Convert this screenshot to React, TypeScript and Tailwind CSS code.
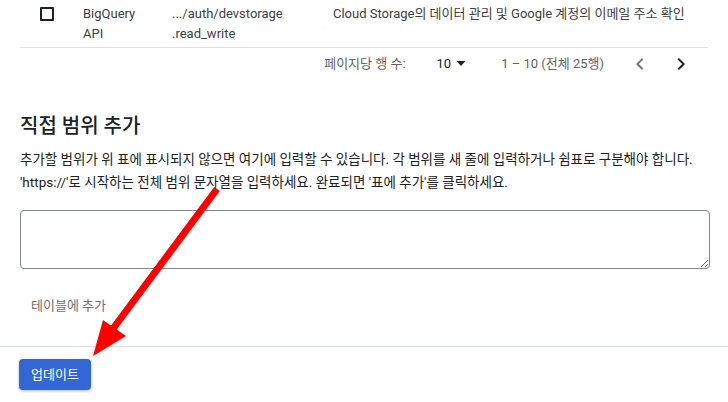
import React from 'react';

const font = "font-['Roboto','Noto_Sans_CJK_KR',sans-serif]";

function Checkbox() {
  return <div className="w-[14px] h-[14px] border-2 border-[#202124] rounded-[1px] mt-[3px]" />;
}

function ScopeRow() {
  return (
    <div className="flex text-[13px] leading-[20px] text-[#3c4043] border-b border-[#e0e0e0] mx-[20px] pt-[4px] pb-[3px]">
      <div className="w-[63px] pl-[20px]">
        <Checkbox />
      </div>
      <div className="w-[89px]">
        BigQuery
        <br />
        API
      </div>
      <div className="w-[161px]">
        .../auth/devstorage
        <br />
        .read_write
      </div>
      <div>Cloud Storage의 데이터 관리 및 Google 계정의 이메일 주소 확인</div>
    </div>
  );
}

function Pagination() {
  return (
    <div className="flex items-center justify-end h-[32px] pr-[35px] text-[13px] text-[#5f6368]">
      <span>페이지당 행 수:</span>
      <span className="ml-[31px] text-[#202124] flex items-center">
        10
        <svg width="10" height="6" viewBox="0 0 10 6" className="ml-[5px]">
          <path d="M0.5 0h9L5 5z" fill="#202124" />
        </svg>
      </span>
      <span className="ml-[35px]">1 – 10 (전체 25행)</span>
      <svg width="24" height="24" viewBox="0 0 24 24" className="ml-[24px]">
        <path d="M15.4 7.4 14 6l-6 6 6 6 1.4-1.4L10.8 12z" fill="#757575" />
      </svg>
      <svg width="24" height="24" viewBox="0 0 24 24" className="ml-[17px]">
        <path d="M10 6 8.6 7.4 13.2 12l-4.6 4.6L10 18l6-6z" fill="#202124" />
      </svg>
    </div>
  );
}

function Arrow() {
  return (
    <svg className="absolute left-0 top-0 pointer-events-none" width="728" height="402" viewBox="0 0 728 402">
      <line x1="217" y1="189" x2="112" y2="330" stroke="#ff0000" strokeWidth="7" />
      <polygon points="93,356 103,320 126,336" fill="#ff0000" />
    </svg>
  );
}

export default function App() {
  return (
    <div className={`relative w-[728px] h-[402px] overflow-hidden bg-white ${font}`}>
      <ScopeRow />
      <Pagination />

      <section className="px-[20px] pt-[32px]">
        <h2 className="text-[20px] leading-[28px] font-medium text-[#202124]">직접 범위 추가</h2>
        <p className="mt-[8px] text-[13.5px] leading-[23px] text-[#202124]">
          추가할 범위가 위 표에 표시되지 않으면 여기에 입력할 수 있습니다. 각 범위를 새 줄에 입력하거나 쉼표로 구분해야 합니다.
          <br />
          'https://'로 시작하는 전체 범위 문자열을 입력하세요. 완료되면 '표에 추가'를 클릭하세요.
        </p>
        <textarea className="block mt-[16px] w-[690px] h-[59px] border border-[#80868b] rounded-[4px] outline-none" />
        <button type="button" className="mt-[19px] ml-[-9px] px-[20px] h-[36px] text-[13px] text-[#6f6f6f] bg-transparent">
          테이블에 추가
        </button>
      </section>

      <div className="mt-[22px] border-t border-[#dadce0] px-[19px] pt-[12px]">
        <button
          type="button"
          className="h-[31px] px-[12px] rounded-[4px] bg-[#3367d6] text-white text-[13px] shadow-[0_1px_3px_rgba(60,64,67,0.4)]"
        >
          업데이트
        </button>
      </div>

      <Arrow />
    </div>
  );
}
